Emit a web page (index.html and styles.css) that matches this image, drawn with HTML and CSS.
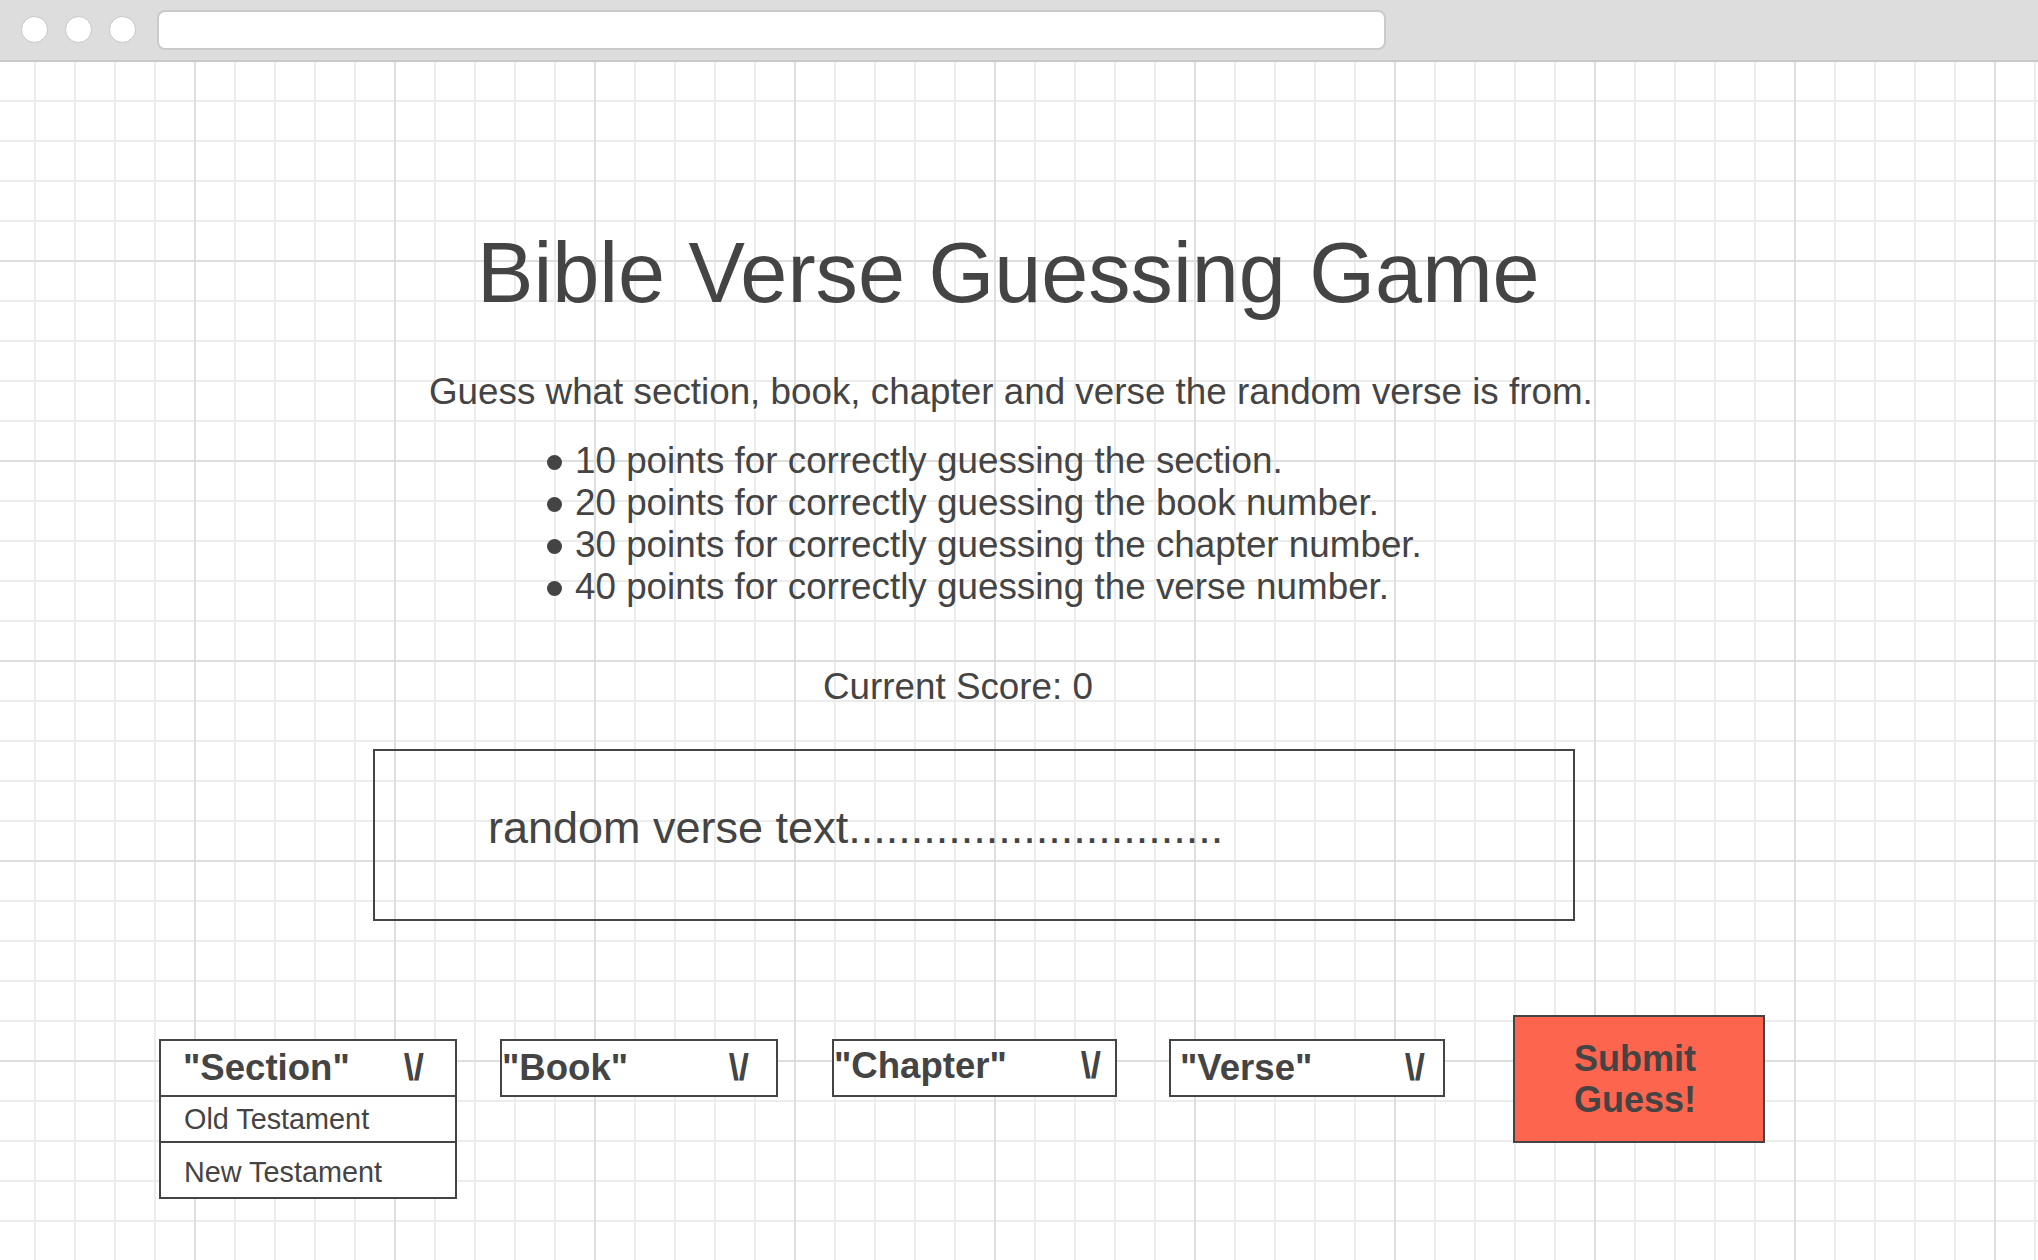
FILE: index.html
```html
<!DOCTYPE html>
<html lang="en">
<head>
<meta charset="utf-8">
<title>Bible Verse Guessing Game</title>
<link rel="stylesheet" href="styles.css">
</head>
<body>
<div class="browser">
  <header class="topbar">
    <span class="dot"></span>
    <span class="dot"></span>
    <span class="dot"></span>
    <div class="address"></div>
  </header>
  <main class="canvas">
    <h1 class="title">Bible Verse Guessing Game</h1>
    <p class="intro">Guess what section, book, chapter and verse the random verse is from.</p>
    <ul class="rules">
      <li>10 points for correctly guessing the section.</li>
      <li>20 points for correctly guessing the book number.</li>
      <li>30 points for correctly guessing the chapter number.</li>
      <li>40 points for correctly guessing the verse number.</li>
    </ul>
    <p class="score">Current Score: 0</p>
    <div class="verse-box">
      <p class="verse-text">random verse text..............................</p>
    </div>
    <div class="controls">
      <div class="dropdown dropdown--section">
        <div class="dropdown__head"><span class="label">"Section"</span><span class="caret">\/</span></div>
        <div class="dropdown__option">Old Testament</div>
        <div class="dropdown__option dropdown__option--last">New Testament</div>
      </div>
      <div class="dropdown dropdown--book">
        <div class="dropdown__head"><span class="label">"Book"</span><span class="caret">\/</span></div>
      </div>
      <div class="dropdown dropdown--chapter">
        <div class="dropdown__head"><span class="label">"Chapter"</span><span class="caret">\/</span></div>
      </div>
      <div class="dropdown dropdown--verse">
        <div class="dropdown__head"><span class="label">"Verse"</span><span class="caret">\/</span></div>
      </div>
      <button class="submit" type="button">Submit<br>Guess!</button>
    </div>
  </main>
</div>
</body>
</html>
```
FILE: styles.css
```css
* { box-sizing: border-box; }

html, body {
  margin: 0;
  padding: 0;
}

body {
  width: 2038px;
  height: 1260px;
  overflow: hidden;
  font-family: "Liberation Sans", Arial, sans-serif;
  color: #444444;
  background: #ffffff;
}

.browser {
  display: flex;
  flex-direction: column;
  height: 1260px;
}

/* ---------- browser chrome ---------- */
.topbar {
  height: 62px;
  flex: 0 0 62px;
  background: #dddddd;
  border-bottom: 2px solid #c9c9c9;
  display: flex;
  align-items: center;
  padding-left: 21px;
}

.dot {
  width: 27px;
  height: 27px;
  border-radius: 50%;
  background: #ffffff;
  border: 1.5px solid #c6c6c6;
  margin-right: 17px;
  margin-top: -1px;
}

.dot:nth-child(3) { margin-right: 21px; }

.address {
  width: 1229px;
  height: 40px;
  margin-top: -1px;
  background: #ffffff;
  border: 2px solid #cacaca;
  border-radius: 8px;
}

/* ---------- canvas ---------- */
.canvas {
  flex: 1 1 auto;
  padding-top: 161px;
  background-color: #ffffff;
  background-image:
    linear-gradient(to right, #dedede 2px, transparent 2px),
    linear-gradient(to bottom, #dedede 2px, transparent 2px),
    linear-gradient(to right, #ececec 2px, transparent 2px),
    linear-gradient(to bottom, #ececec 2px, transparent 2px);
  background-size:
    200px 100%,
    100% 200px,
    40px 100%,
    100% 40px;
  background-position:
    194px 0,
    0 198px,
    34px 0,
    0 38px;
}

.title {
  margin: 0 0 0 477px;
  font-size: 84.6px;
  line-height: 100px;
  font-weight: 400;
  white-space: nowrap;
}

.intro {
  margin: 47px 0 0 429px;
  font-size: 36.8px;
  line-height: 44px;
  white-space: nowrap;
}

.rules {
  list-style: none;
  margin: 26px 0 0 547px;
  padding: 0;
  font-size: 36.8px;
  line-height: 42px;
}

.rules li {
  white-space: nowrap;
}

.rules li::before {
  content: "";
  display: inline-block;
  width: 15px;
  height: 15px;
  border-radius: 50%;
  background: #444444;
  margin-right: 13px;
  vertical-align: 3px;
}

.score {
  margin: 57px 0 0 823px;
  font-size: 36.8px;
  line-height: 44px;
  white-space: nowrap;
}

.verse-box {
  margin: 40px 0 0 373px;
  width: 1202px;
  height: 172px;
  border: 2px solid #444444;
  padding: 50px 0 0 113px;
}

.verse-text {
  margin: 0;
  font-size: 45px;
  line-height: 54px;
  white-space: nowrap;
}

/* ---------- controls ---------- */
.controls {
  margin-top: 94px;
  display: flex;
  align-items: flex-start;
}

.dropdown {
  margin-top: 24px;
  border: 2px solid #444444;
  background: #ffffff;
}

.dropdown__head {
  height: 54px;
  display: flex;
  justify-content: space-between;
  align-items: center;
  font-size: 36.6px;
  font-weight: 700;
  line-height: 54px;
  white-space: nowrap;
}

.caret {
  font-weight: 700;
}

.dropdown--section {
  margin-left: 159px;
  width: 298px;
}

.dropdown--section .dropdown__head {
  padding: 0 31px 0 22px;
  height: 56px;
  border-bottom: 2px solid #444444;
}

.dropdown__option {
  height: 46px;
  padding-left: 23px;
  font-size: 28.8px;
  line-height: 44px;
  border-bottom: 2px solid #444444;
  white-space: nowrap;
}

.dropdown__option--last {
  height: 54px;
  padding-top: 4px;
  line-height: 50px;
  border-bottom: 0;
}

.dropdown--book {
  margin-left: 43px;
  width: 278px;
}

.dropdown--book .dropdown__head {
  padding: 0 27px 0 0;
}

.dropdown--chapter {
  margin-left: 54px;
  width: 285px;
}

.dropdown--chapter .dropdown__head {
  padding: 0 14px 4px 0;
}

.dropdown--verse {
  margin-left: 52px;
  width: 276px;
}

.dropdown--verse .dropdown__head {
  padding: 0 18px 0 9px;
}

.submit {
  margin-left: 68px;
  width: 252px;
  height: 128px;
  border: 2px solid #444444;
  background: #fd654e;
  color: #444444;
  font-family: "Liberation Sans", Arial, sans-serif;
  font-size: 36px;
  font-weight: 700;
  line-height: 41px;
  text-align: center;
  padding: 0 8px 0 0;
  margin-top: 0;
  border-radius: 0;
}
```
